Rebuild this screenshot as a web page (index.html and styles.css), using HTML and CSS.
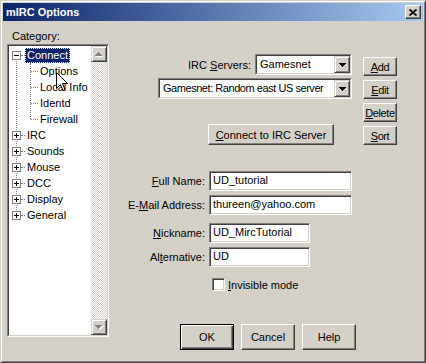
FILE: index.html
```html
<!DOCTYPE html>
<html lang="en">
<head>
  <meta charset="UTF-8">
  <title>mIRC Options</title>
  <link rel="stylesheet" href="styles.css">
</head>
<body>
  <div class="window">
    <div class="titlebar">
      <span class="title">mIRC Options</span>
      <span class="close">
        <svg width="8" height="7" viewBox="0 0 8 7"><path d="M0.5 0.5 L7.5 6.5 M7.5 0.5 L0.5 6.5" stroke="#000" stroke-width="1.8" fill="none"/></svg>
      </span>
    </div>

    <div class="content">
      <!-- Category tree -->
      <div class="left">
        <div class="cat-label">Category:</div>
        <div class="tree">
          <div class="tree-in">
            <div class="tree-items">
              <div class="node"><span class="exp"></span><span class="dash"></span><span class="label selected">Connect</span></div>
              <div class="children">
                <div class="child"><span class="dash"></span><span class="label">Options</span></div>
                <div class="child"><span class="dash"></span><span class="label">Local Info</span></div>
                <div class="child"><span class="dash"></span><span class="label">Identd</span></div>
                <div class="child"><span class="dash"></span><span class="label">Firewall</span></div>
              </div>
              <div class="node"><span class="exp plus"></span><span class="dash"></span><span class="label">IRC</span></div>
              <div class="node"><span class="exp plus"></span><span class="dash"></span><span class="label">Sounds</span></div>
              <div class="node"><span class="exp plus"></span><span class="dash"></span><span class="label">Mouse</span></div>
              <div class="node"><span class="exp plus"></span><span class="dash"></span><span class="label">DCC</span></div>
              <div class="node"><span class="exp plus"></span><span class="dash"></span><span class="label">Display</span></div>
              <div class="node"><span class="exp plus"></span><span class="dash"></span><span class="label">General</span></div>
            </div>
            <div class="scrollbar">
              <div class="sb-btn">
                <svg width="8" height="5" viewBox="0 0 8 5" shape-rendering="crispEdges"><polygon points="1,5 8,5 4.5,1" fill="#fff"/><polygon points="0,4 7,4 3.5,0" fill="#808080"/></svg>
              </div>
              <div class="sb-track"></div>
              <div class="sb-btn">
                <svg width="8" height="5" viewBox="0 0 8 5" shape-rendering="crispEdges"><polygon points="1,1 8,1 4.5,5" fill="#fff"/><polygon points="0,0 7,0 3.5,4" fill="#808080"/></svg>
              </div>
            </div>
          </div>
        </div>
      </div>

      <!-- Connect page -->
      <div class="right">
        <div class="top">
          <div class="server-fields">
            <div class="row1">
              <span>IRC <u>S</u>ervers:</span>
              <div class="combo small">
                <div class="combo-in">
                  <span class="combo-text">Gamesnet</span>
                  <span class="drop"><svg width="7" height="4" viewBox="0 0 7 4" shape-rendering="crispEdges"><polygon points="0,0 7,0 3.5,4" fill="#000"/></svg></span>
                </div>
              </div>
            </div>
            <div class="combo wide">
              <div class="combo-in">
                <span class="combo-text tight">Gamesnet: Random east US server</span>
                <span class="drop"><svg width="7" height="4" viewBox="0 0 7 4" shape-rendering="crispEdges"><polygon points="0,0 7,0 3.5,4" fill="#000"/></svg></span>
              </div>
            </div>
            <button class="btn connect"><u>C</u>onnect to IRC Server</button>
          </div>
          <div class="side-buttons">
            <button class="btn side"><u>A</u>dd</button>
            <button class="btn side"><u>E</u>dit</button>
            <button class="btn side"><u>D</u>elete</button>
            <button class="btn side"><u>S</u>ort</button>
          </div>
        </div>

        <div class="form">
          <div class="field">
            <label><u>F</u>ull Name:</label>
            <div class="input long">UD_tutorial</div>
          </div>
          <div class="field">
            <label>E-<u>M</u>ail Address:</label>
            <div class="input long">thureen@yahoo.com</div>
          </div>
          <div class="field spaced">
            <label><u>N</u>ickname:</label>
            <div class="input short">UD_MircTutorial</div>
          </div>
          <div class="field">
            <label>Al<u>t</u>ernative:</label>
            <div class="input short">UD</div>
          </div>
        </div>

        <div class="check">
          <span class="box"></span>
          <span><u>I</u>nvisible mode</span>
        </div>

        <div class="buttons">
          <button class="btn dlg default">OK</button>
          <button class="btn dlg">Cancel</button>
          <button class="btn dlg">Help</button>
        </div>
      </div>
    </div>

    <svg class="cursor" width="12" height="20" viewBox="0 0 12 20">
      <path d="M0.5 0.5 L0.5 16.5 L4.5 12.5 L7 18.5 L9 17.5 L6.5 11.5 L11.5 11.5 Z" fill="#fff" stroke="#000" stroke-width="1"/>
    </svg>
  </div>
</body>
</html>
```

FILE: styles.css
```css
* {
  box-sizing: border-box;
}
body {
  margin: 0;
  font-family: "Liberation Sans", Arial, sans-serif;
  font-size: 11px;
  color: #000;
  overflow: hidden;
}
u {
  text-decoration: underline;
  text-underline-offset: 1px;
}
.window {
  position: relative;
  width: 426px;
  height: 363px;
  background: #d4d0c8;
  border: 1px solid;
  border-color: #d4d0c8 #404040 #404040 #d4d0c8;
  box-shadow: inset 1px 1px #fff, inset -1px -1px #808080;
  padding: 2px;
}
.titlebar {
  height: 18px;
  display: flex;
  align-items: center;
  justify-content: space-between;
  padding: 0 2px 0 2px;
  background: linear-gradient(to right, #0a246a, #a6caf0);
}
.title {
  color: #fff;
  font-weight: bold;
  padding-left: 1px;
}
.close {
  width: 16px;
  height: 14px;
  display: flex;
  align-items: center;
  justify-content: center;
  background: #d4d0c8;
  border: 1px solid;
  border-color: #fff #404040 #404040 #fff;
  box-shadow: inset -1px -1px #808080;
}
.content {
  display: flex;
}

/* tree */
.left {
  width: 102px;
  margin-left: 4px;
}
.cat-label {
  margin: 9px 0 0 5px;
  line-height: 13px;
}
.tree {
  margin-top: 1px;
  height: 293px;
  border: 1px solid;
  border-color: #808080 #fff #fff #808080;
}
.tree-in {
  height: 100%;
  display: flex;
  border: 1px solid;
  border-color: #404040 #d4d0c8 #d4d0c8 #404040;
}
.tree-items {
  position: relative;
  flex: 1;
  background: #fff;
  padding-top: 1px;
}
.tree-items::before {
  content: "";
  position: absolute;
  left: 7px;
  top: 12px;
  height: 152px;
  border-left: 1px dotted #808080;
}
.node, .child {
  height: 16px;
  display: flex;
  align-items: center;
}
.exp {
  position: relative;
  width: 9px;
  height: 9px;
  margin-left: 3px;
  border: 1px solid #808080;
  background: #fff;
  z-index: 1;
}
.exp::before {
  content: "";
  position: absolute;
  left: 1px;
  top: 3px;
  width: 5px;
  height: 1px;
  background: #000;
}
.exp.plus::after {
  content: "";
  position: absolute;
  left: 3px;
  top: 1px;
  width: 1px;
  height: 5px;
  background: #000;
}
.dash {
  width: 4px;
  border-top: 1px dotted #808080;
}
.label {
  line-height: 13px;
  border: 1px solid transparent;
  padding: 0 1px;
  white-space: nowrap;
}
.label.selected {
  background: #0a246a;
  color: #fff;
  border: 1px dotted #e8e4c0;
}
.children {
  position: relative;
}
.children::before {
  content: "";
  position: absolute;
  left: 21px;
  top: 0;
  height: 56px;
  border-left: 1px dotted #808080;
}
.child {
  padding-left: 22px;
}
.child .dash {
  width: 7px;
}
.scrollbar {
  width: 16px;
  display: flex;
  flex-direction: column;
}
.sb-btn, .drop {
  width: 16px;
  height: 16px;
  display: flex;
  align-items: center;
  justify-content: center;
  background: #d4d0c8;
  border: 1px solid;
  border-color: #d4d0c8 #404040 #404040 #d4d0c8;
  box-shadow: inset 1px 1px #fff, inset -1px -1px #808080;
}
.sb-track {
  flex: 1;
  background: repeating-conic-gradient(#fff 0 25%, #d4d0c8 0 50%) 0 0 / 2px 2px;
}

/* right side */
.right {
  flex: 1;
}
.top {
  display: flex;
  align-items: flex-start;
  margin-top: 33px;
}
.server-fields {
  margin-left: 49px;
  width: 194px;
}
.row1 {
  display: flex;
  justify-content: flex-end;
  align-items: center;
  gap: 4px;
}
.combo {
  height: 21px;
  border: 1px solid;
  border-color: #808080 #fff #fff #808080;
}
.combo.small {
  width: 97px;
}
.combo.wide {
  width: 194px;
  margin-top: 3px;
}
.combo-in {
  height: 100%;
  display: flex;
  background: #fff;
  border: 1px solid;
  border-color: #404040 #d4d0c8 #d4d0c8 #404040;
}
.combo-text {
  flex: 1;
  padding-left: 3px;
  line-height: 17px;
  white-space: nowrap;
  overflow: hidden;
}
.combo-text.tight {
  letter-spacing: -0.45px;
}
.drop {
  height: 17px;
}
.btn {
  font: inherit;
  color: #000;
  padding: 0;
  background: #d4d0c8;
  border: 1px solid;
  border-color: #fff #404040 #404040 #fff;
  box-shadow: inset -1px -1px #808080;
}
.connect {
  display: block;
  margin: 25px 0 0 50px;
  width: 126px;
  height: 21px;
}
.side-buttons {
  display: flex;
  flex-direction: column;
  gap: 4px;
  margin: 3px 0 0 11px;
}
.side {
  width: 34px;
  height: 19px;
  letter-spacing: -0.4px;
  white-space: nowrap;
}
.form {
  margin-top: 26px;
}
.field {
  display: flex;
  align-items: center;
  gap: 4px;
  margin-bottom: 4px;
}
.field.spaced {
  margin-top: 8px;
}
.field label {
  width: 96px;
  text-align: right;
  white-space: nowrap;
}
.input {
  height: 20px;
  line-height: 16px;
  background: #fff;
  border: 1px solid;
  border-color: #808080 #fff #fff #808080;
  box-shadow: inset 1px 1px #404040, inset -1px -1px #d4d0c8;
  padding-left: 3px;
}
.input.long {
  width: 143px;
}
.input.short {
  width: 101px;
}
.check {
  display: flex;
  align-items: center;
  gap: 3px;
  margin: 11px 0 0 103px;
}
.box {
  width: 13px;
  height: 13px;
  background: #fff;
  border: 1px solid;
  border-color: #808080 #fff #fff #808080;
  box-shadow: inset 1px 1px #404040, inset -1px -1px #d4d0c8;
}
.buttons {
  display: flex;
  gap: 7px;
  margin: 33px 0 0 71px;
}
.dlg {
  width: 54px;
  height: 26px;
}
.dlg.default {
  border-color: #000;
  box-shadow: inset 1px 1px #fff, inset -1px -1px #404040, inset -2px -2px #808080;
}
.cursor {
  position: absolute;
  left: 55px;
  top: 71px;
}
```
